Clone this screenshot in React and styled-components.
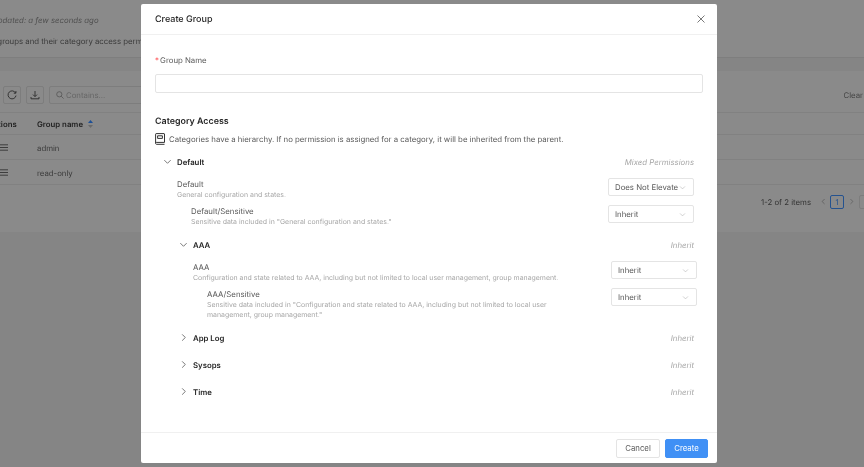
import React from 'react'
import styled, { createGlobalStyle } from 'styled-components'

const GlobalStyle = createGlobalStyle`
  html, body { margin: 0; padding: 0; }
  body {
    font-family: Inter, "Noto Sans", sans-serif;
    text-rendering: geometricPrecision;
  }
`

const Chevron = ({ open, size = 9, color = '#595959' }) => (
  <svg width={size} height={size} viewBox="0 0 10 10" fill="none" stroke={color} strokeWidth="0.9">
    {open ? <path d="M1.5 3.5L5 7l3.5-3.5" /> : <path d="M3.5 1.5L7 5 3.5 8.5" />}
  </svg>
)

const ChevronLeft = () => (
  <svg width="7" height="7" viewBox="0 0 10 10" fill="none" stroke="#555" strokeWidth="1">
    <path d="M6.5 1.5L3 5l3.5 3.5" />
  </svg>
)

const Close = () => (
  <svg width="8" height="8" viewBox="0 0 8 8" fill="none" stroke="#555" strokeWidth="0.8">
    <path d="M0.5 0.5l7 7M7.5 0.5l-7 7" />
  </svg>
)

const Book = () => (
  <svg width="10" height="12" viewBox="0 0 10 12" fill="none" stroke="#333" strokeWidth="1">
    <path d="M.6 10V1.2C.6.9.8.6 1.1.6h8c.2 0 .4.2.4.4v8.4H1.5C1 9.4.6 9.8.6 10.3v.1c0 .5.4.9.9.9h8" />
    <path d="M2.6 2.8h4.8v2.6H2.6z" />
  </svg>
)

const Refresh = () => (
  <svg width="10" height="10" viewBox="0 0 10 10" fill="none" stroke="#2a2a2a" strokeWidth="0.9">
    <path d="M8.6 3A4 4 0 1 0 9 5.6" />
    <path d="M8.9 1v2.2H6.8" />
  </svg>
)

const Download = () => (
  <svg width="10" height="10" viewBox="0 0 10 10" fill="none" stroke="#2a2a2a" strokeWidth="0.9">
    <path d="M5 1v5.4M3 4.6L5 6.6l2-2M1 7v1.8h8V7" />
  </svg>
)

const Search = () => (
  <svg width="8" height="8" viewBox="0 0 8 8" fill="none" stroke="#555" strokeWidth="0.8">
    <circle cx="3.3" cy="3.3" r="2.6" />
    <path d="M5.2 5.2l2.4 2.4" />
  </svg>
)

const Menu = () => (
  <svg width="8" height="7" viewBox="0 0 8 7" fill="none" stroke="#2a2a2a" strokeWidth="0.8">
    <path d="M0 .8h8M0 3.5h8M0 6.2h8" />
  </svg>
)

const Sorter = () => (
  <svg width="5" height="8" viewBox="0 0 5 8">
    <path d="M2.5 0L5 3H0z" fill="#1d4f96" />
    <path d="M2.5 8L0 5h5z" fill="#6b6b6b" />
  </svg>
)

function Select({ value }) {
  return (
    <SelectBox>
      <SelectValue>{value}</SelectValue>
      <Chevron open size={7} color="#b5b5b5" />
    </SelectBox>
  )
}

function Permission({ name, desc, value, indent }) {
  return (
    <PermRow indent={indent}>
      <PermText>
        <PermName>{name}</PermName>
        <PermDesc>{desc}</PermDesc>
      </PermText>
      <Select value={value} />
    </PermRow>
  )
}

function Collapsed({ name }) {
  return (
    <CategoryRow collapsed>
      <Toggle><Chevron /></Toggle>
      <CategoryName>{name}</CategoryName>
      <CategoryStatus>Inherit</CategoryStatus>
    </CategoryRow>
  )
}

export default function App() {
  return (
    <Page>
      <GlobalStyle />
      <Backdrop>
        <Updated>Updated: a few seconds ago</Updated>
        <Description>All groups and their category access permissions</Description>
        <Band />
        <Panel>
          <Toolbar>
            <IconButton><Refresh /></IconButton>
            <IconButton><Download /></IconButton>
            <SearchBox><Search /><span>Contains...</span></SearchBox>
            <ClearAll>Clear</ClearAll>
          </Toolbar>
          <TableRow head>
            <ActionsCell>Actions</ActionsCell>
            <NameCell>Group name <Sorter /></NameCell>
          </TableRow>
          <TableRow>
            <ActionsCell icon><Menu /></ActionsCell>
            <NameCell>admin</NameCell>
          </TableRow>
          <TableRow>
            <ActionsCell icon><Menu /></ActionsCell>
            <NameCell>read-only</NameCell>
          </TableRow>
          <Pagination>
            <ItemCount>1-2 of 2 items</ItemCount>
            <PageArrow><ChevronLeft /></PageArrow>
            <PageNumber>1</PageNumber>
            <PageArrow><Chevron size={7} color="#555" /></PageArrow>
            <PageSize />
          </Pagination>
        </Panel>
      </Backdrop>

      <Modal>
        <ModalHeader>
          <ModalTitle>Create Group</ModalTitle>
          <Close />
        </ModalHeader>
        <ModalBody>
          <FieldLabel><Required>*</Required> Group Name</FieldLabel>
          <TextInput />
          <SectionTitle>Category Access</SectionTitle>
          <Note><Book />Categories have a hierarchy. If no permission is assigned for a category, it will be inherited from the parent.</Note>

          <Tree>
            <CategoryRow>
              <Toggle><Chevron open /></Toggle>
              <CategoryName>Default</CategoryName>
              <CategoryStatus>Mixed Permissions</CategoryStatus>
            </CategoryRow>
            <Permission name="Default" desc="General configuration and states." value="Does Not Elevate" />
            <Permission name="Default/Sensitive" desc={'Sensitive data included in "General configuration and states."'} value="Inherit" indent />

            <Nested>
              <CategoryRow>
                <Toggle><Chevron open /></Toggle>
                <CategoryName>AAA</CategoryName>
                <CategoryStatus>Inherit</CategoryStatus>
              </CategoryRow>
              <NestedPerms>
                <Permission name="AAA" desc="Configuration and state related to AAA, including but not limited to local user management, group management." value="Inherit" />
                <Permission name="AAA/Sensitive" desc={'Sensitive data included in "Configuration and state related to AAA, including but not limited to local user management, group management."'} value="Inherit" indent />
              </NestedPerms>
              <Collapsed name="App Log" />
              <Collapsed name="Sysops" />
              <Collapsed name="Time" />
            </Nested>
          </Tree>
        </ModalBody>
        <ModalFooter>
          <CancelButton>Cancel</CancelButton>
          <CreateButton>Create</CreateButton>
        </ModalFooter>
      </Modal>
    </Page>
  )
}

const Page = styled.div`
  position: relative;
  width: 864px;
  height: 467px;
  overflow: hidden;
  background: #858585;
  color: #333;
  font-size: 7.8px;
  filter: blur(0.35px);
`

const Backdrop = styled.div`
  margin-left: -22px;
  width: 886px;
`

const Updated = styled.div`
  font-style: italic;
  color: #4f4f4f;
  padding: 15px 0 0 14px;
  line-height: 11px;
  white-space: nowrap;
  background: #8a8a8a;
`

const Description = styled.div`
  color: #3a3a3a;
  padding: 10px 0 10px 8px;
  line-height: 11px;
  white-space: nowrap;
  background: #8a8a8a;
`

const Band = styled.div`
  height: 14px;
  box-sizing: border-box;
  background: #858585;
  border-top: 1px solid #7e7e7e;
`

const Panel = styled.div`
  height: 161px;
  background: #8a8a8a;
`

const Toolbar = styled.div`
  display: flex;
  align-items: center;
  gap: 5px;
  height: 42px;
  box-sizing: border-box;
  padding: 7px 0 0 25px;
  border-bottom: 1px solid #818181;
`

const IconButton = styled.div`
  width: 18px;
  height: 18px;
  box-sizing: border-box;
  display: flex;
  align-items: center;
  justify-content: center;
  border: 1px solid #7d7d7d;
  border-radius: 2px;
`

const SearchBox = styled.div`
  width: 100px;
  height: 18px;
  box-sizing: border-box;
  display: flex;
  align-items: center;
  gap: 2px;
  padding-left: 6px;
  border: 1px solid #7d7d7d;
  border-radius: 2px;
  color: #666;
`

const ClearAll = styled.div`
  margin: -1px 0 0 auto;
  padding-right: 1px;
  color: #444;
  white-space: nowrap;
`

const TableRow = styled.div`
  display: flex;
  align-items: center;
  height: ${p => (p.head ? 22 : 25)}px;
  box-sizing: border-box;
  padding-top: 1px;
  border-bottom: 1px solid #818181;
  font-weight: ${p => (p.head ? 600 : 400)};
  color: ${p => (p.head ? '#222' : '#3a3a3a')};
`

const ActionsCell = styled.div`
  display: flex;
  width: 59px;
  padding-left: ${p => (p.icon ? 22 : 10)}px;
  box-sizing: border-box;
`

const NameCell = styled.div`
  display: flex;
  align-items: center;
  gap: 5px;
`

const Pagination = styled.div`
  display: flex;
  align-items: center;
  justify-content: flex-end;
  gap: 3px;
  margin-top: 9px;
  margin-right: -25px;
  height: 15px;
  color: #333;
`

const ItemCount = styled.span`
  margin-right: 5px;
`

const PageArrow = styled.div`
  display: flex;
  width: 8px;
  justify-content: center;
`

const PageNumber = styled.div`
  width: 14px;
  height: 14px;
  box-sizing: border-box;
  border: 1px solid #24528f;
  border-radius: 2px;
  color: #24528f;
  display: flex;
  align-items: center;
  justify-content: center;
`

const PageSize = styled.div`
  width: 30px;
  height: 14px;
  box-sizing: border-box;
  margin-left: 1px;
  border: 1px solid #7d7d7d;
  border-radius: 2px;
`

const Modal = styled.div`
  position: absolute;
  left: 141px;
  top: 4px;
  width: 576px;
  height: 459px;
  display: flex;
  flex-direction: column;
  background: #fff;
  border-radius: 2px;
`

const ModalHeader = styled.div`
  flex: none;
  height: 31px;
  box-sizing: border-box;
  display: flex;
  align-items: center;
  justify-content: space-between;
  padding: 0 12px 0 14px;
  border-bottom: 1px solid #f0f0f0;
`

const ModalTitle = styled.div`
  font-size: 9px;
  font-weight: 500;
  color: #262626;
`

const ModalBody = styled.div`
  flex: 1;
  min-height: 0;
  padding: 20px 14px 0;
`

const FieldLabel = styled.div`
  line-height: 11px;
  color: #595959;
`

const Required = styled.span`
  color: #ff4d4f;
  margin-right: -1px;
`

const TextInput = styled.div`
  height: 19px;
  box-sizing: border-box;
  margin-top: 8px;
  border: 1px solid #e4e4e4;
  border-radius: 2px;
`

const SectionTitle = styled.div`
  margin-top: 23px;
  font-size: 8.9px;
  line-height: 12px;
  font-weight: 600;
  color: #262626;
`

const Note = styled.div`
  display: flex;
  align-items: center;
  gap: 4px;
  margin-top: 5px;
  line-height: 12px;
  color: #595959;
`

const Tree = styled.div`
  margin-top: 11px;
  padding: 0 9px 0 8px;
`

const CategoryRow = styled.div`
  display: flex;
  align-items: center;
  height: 11px;
  margin-bottom: ${p => (p.collapsed ? 16 : 11)}px;
`

const Toggle = styled.div`
  width: 14px;
  flex: none;
  display: flex;
`

const CategoryName = styled.div`
  flex: 1;
  font-weight: 600;
  color: #262626;
`

const CategoryStatus = styled.div`
  font-style: italic;
  color: #a6a6a6;
`

const PermRow = styled.div`
  display: flex;
  align-items: flex-start;
  justify-content: space-between;
  margin-left: ${p => (p.indent ? 28 : 14)}px;
  margin-bottom: 5px;
`

const PermText = styled.div`
  max-width: 375px;
  flex: 1;
`

const PermName = styled.div`
  line-height: 12px;
  color: #595959;
`

const PermDesc = styled.div`
  font-size: 6.95px;
  line-height: 10px;
  color: #a6a6a6;
`

const SelectBox = styled.div`
  flex: none;
  width: 86px;
  height: 18px;
  box-sizing: border-box;
  display: flex;
  align-items: center;
  justify-content: space-between;
  padding: 0 7px 0 6px;
  border: 1px solid #e4e4e4;
  border-radius: 2px;
`

const SelectValue = styled.span`
  color: #595959;
  white-space: nowrap;
`

const Nested = styled.div`
  margin-left: 16px;
  padding-top: 7px;
`

const NestedPerms = styled.div`
  margin-right: -3px;
  padding-bottom: 7px;
`

const ModalFooter = styled.div`
  flex: none;
  height: 31px;
  box-sizing: border-box;
  display: flex;
  align-items: center;
  justify-content: flex-end;
  gap: 5px;
  padding-right: 9px;
  border-top: 1px solid #f0f0f0;
`

const CancelButton = styled.button`
  width: 44px;
  height: 19px;
  padding: 0;
  font: inherit;
  color: #595959;
  background: #fff;
  border: 1px solid #e4e4e4;
  border-radius: 2px;
`

const CreateButton = styled.button`
  width: 43px;
  height: 19px;
  padding: 0;
  font: inherit;
  color: #fff;
  background: #4090f5;
  border: 1px solid #4090f5;
  border-radius: 2px;
`
